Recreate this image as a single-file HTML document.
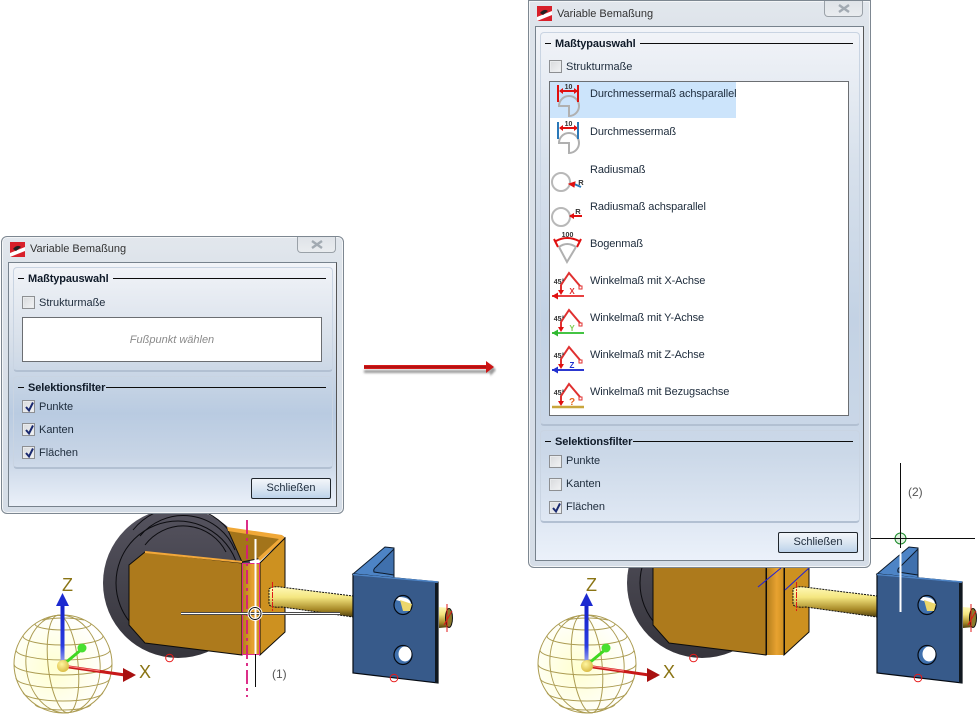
<!DOCTYPE html>
<html lang="de"><head><meta charset="utf-8"><title>Variable Bemaßung</title>
<style>
html,body{margin:0;padding:0;background:#fff;width:977px;height:716px;overflow:hidden}
body{position:relative;font-family:"Liberation Sans",sans-serif;font-size:11px;color:#1c2a3a}
.a{position:absolute}
svg.scene{position:absolute;left:0;top:0}
.dlg{position:absolute;border:1px solid #7d8791;border-radius:6px;background:linear-gradient(#e2e7ed,#dde3ea 30px,#d5dde7);box-sizing:border-box;box-shadow:inset 0 0 0 1px #f3f5f7}
.client{position:absolute;left:6px;top:25px;border:1px solid #77828d;border-right-color:#555;box-sizing:border-box;background:#e8eef7}
.grp{position:absolute;left:4px;border-radius:4px;box-sizing:border-box;border:1px solid #c9d4e2;border-bottom:2px solid #b2c0d2}
.lg{position:absolute;left:19px;font-weight:bold;font-size:11px;color:#0f1a28;line-height:14px;white-space:nowrap;letter-spacing:-.1px}
.ln{position:absolute;height:1px;background:#0c0c0c}
.cb{position:absolute;width:13px;height:13px;box-sizing:border-box;border:1px solid #8d8f92;background:linear-gradient(135deg,#d8dadd,#f2f3f4);box-shadow:inset 0 0 0 1px #e9ebed}
.cb svg{position:absolute;left:1px;top:0}
.t{position:absolute;white-space:nowrap;line-height:14px;font-size:11px;letter-spacing:-.02px;color:#1d2b3b}
.li{letter-spacing:-.1px}
.btn{position:absolute;width:80px;height:21px;box-sizing:border-box;border:1px solid #20262c;border-radius:2px;background:linear-gradient(#f3f6fa,#dbe6f2 50%,#bcd2ea);text-align:center;line-height:19px;font-size:11px;color:#1d2b3b}
.close{position:absolute;width:39px;height:16px;border:1px solid #9aa1a8;border-top:0;border-radius:0 0 4px 4px;background:linear-gradient(#dfe3e8,#e9ecef);box-sizing:border-box;text-align:center}
.close svg{margin-top:3px}
.lst{position:absolute;background:#fff;border:1px solid #6b6e72;box-sizing:border-box}
</style></head><body>

<svg class="scene" width="977" height="716" viewBox="0 0 977 716" font-family="Liberation Sans, sans-serif">
<defs>
<linearGradient id="sh" x1="0" y1="0" x2="0" y2="1"><stop offset="0" stop-color="#fff9b8"/><stop offset=".35" stop-color="#f4e680"/><stop offset=".75" stop-color="#a88a28"/><stop offset="1" stop-color="#4e4010"/></linearGradient>
<radialGradient id="gl" cx=".4" cy=".55" r=".55"><stop offset="0" stop-color="#ffffd0"/><stop offset="1" stop-color="#fff"/></radialGradient>
<radialGradient id="ball" cx=".4" cy=".35" r=".7"><stop offset="0" stop-color="#fff6a0"/><stop offset="1" stop-color="#d8b840"/></radialGradient>
<linearGradient id="wh" x1="0" y1="0" x2="0" y2="1"><stop offset="0" stop-color="#55535f"/><stop offset="1" stop-color="#35343b"/></linearGradient>
<linearGradient id="bend" x1="0" y1="0" x2="1" y2="0"><stop offset="0" stop-color="#b07c1c"/><stop offset=".6" stop-color="#e8a230"/><stop offset="1" stop-color="#cc8f20"/></linearGradient>
<linearGradient id="zax" x1="0" y1="0" x2="0" y2="1"><stop offset="0" stop-color="#1420c8"/><stop offset=".7" stop-color="#2a3ce0"/><stop offset="1" stop-color="#a8b0f0"/></linearGradient>
<filter id="bl" x="-5%" y="-100%" width="110%" height="300%"><feGaussianBlur stdDeviation="1"/></filter>

<g id="model">
 <circle cx="185" cy="575" r="61" fill="#4a4853"/>
 <circle cx="178" cy="583" r="75" fill="url(#wh)"/>
 <path d="M133 530A61 61 0 0 1 232 535M140 536A56 56 0 0 1 235 550M145 545A48 48 0 0 1 226 552" fill="none" stroke="#0c0c10" stroke-width="1"/>
 <circle cx="178" cy="583" r="62" fill="none" stroke="#0c0c10" stroke-width="1"/>
 <path d="M227 528L282 536 285 538 262 558 242 562Z" fill="#a3741a" stroke="#111" stroke-width="1"/>
 <path d="M227 527L282 535 285 538 260 561 258 558 279 539 228 531Z" fill="#f0a838"/>
 <path d="M145 552L242 563 242 655 145 643 129 625 129 565Z" fill="#ad7a1c" stroke="#0c0c0c" stroke-width="1"/>
 <path d="M145 552L242 562" stroke="#f3a83a" stroke-width="2"/>
 <path d="M242 563H260V655H242Z" fill="url(#bend)"/>
 <path d="M260 563L285 538V632L260 655Z" fill="#cd9120" stroke="#0c0c0c" stroke-width="1"/>
 <path d="M269 589Q272 586 280 587L353 596V617L282 607Q270 608 269 604Z" fill="url(#sh)" stroke="#111" stroke-width="1" stroke-dasharray="2 1"/>
 <path d="M272.500 582V611" stroke="#e01818" stroke-dasharray="6 1 2 1" stroke-width="1"/>
 <path d="M385 547L353 574 394 578 394 548Z" fill="#4d84c6" stroke="#0d1a2a" stroke-width="1"/>
 <path d="M394 549V575L374 572Q373 569 376 567Z" fill="#3f70ad" stroke="#0d1a2a" stroke-width="1"/>
 <path d="M353 574L438 582V683L353 673Z" fill="#375a8a" stroke="#050a12" stroke-width="1.200"/>
 <path d="M353 574.500L438 582" stroke="#4d84c6" stroke-width="1.500"/>
 <path d="M435 583H438V683H435Z" fill="#101820"/>
 <ellipse cx="403" cy="605" rx="9" ry="9.500" fill="#3f70ad" stroke="#050a12" stroke-width="1.200"/>
 <path d="M399 597Q410 597 411 604L396 600Z" fill="#fff"/>
 <path d="M400 600L412 604 410 611 403 611Z" fill="#ecd76c"/>
 <ellipse cx="403" cy="655" rx="9" ry="9.500" fill="#3f70ad" stroke="#050a12" stroke-width="1.200"/>
 <ellipse cx="405" cy="654" rx="6.500" ry="7.500" fill="#fff"/>
 <path d="M439 607L450 608V627L439 628Z" fill="url(#sh)"/>
 <ellipse cx="449" cy="618" rx="3.500" ry="9.500" fill="#8b7a2c" stroke="#111" stroke-width="1"/>
 <path d="M447 604V632M444 625L452 611" stroke="#e01818" stroke-width="1"/>
 <circle cx="169.500" cy="658" r="3.800" fill="none" stroke="#e81818"/>
 <circle cx="394" cy="678" r="3.800" fill="none" stroke="#e81818"/>

 <circle cx="63" cy="664" r="49" fill="url(#gl)"/>
 <g fill="none" stroke="#ac9c52" stroke-width="1">
  <circle cx="63" cy="664" r="49"/>
  <ellipse cx="63" cy="664" rx="37" ry="49" transform="rotate(-6 63 664)"/>
  <ellipse cx="63" cy="664" rx="15" ry="49" transform="rotate(-6 63 664)"/>
  <path d="M35 624A28 6 0 0 0 91 624M23 636A40 9 0 0 0 103 636M16 650A47 10 0 0 0 110 650M14 664A49 11 0 0 0 112 664M16 678A47 10 0 0 0 110 678M23 692A40 9 0 0 0 103 692M35 704A28 6 0 0 0 91 704M42 620Q63 616 84 620"/>
 </g>
 <rect x="60.500" y="604" width="4" height="60" fill="url(#zax)"/>
 <path d="M62.500 593L69 606H56Z" fill="#1c2ad0"/>
 <path d="M62 666L132 676" stroke="#c81818" stroke-width="3"/>
 <path d="M66 666L100 671" stroke="#ff8080" stroke-width="1"/>
 <path d="M136 675L123 668V682Z" fill="#a81010"/>
 <path d="M64 664L82 649" stroke="#40d820" stroke-width="3"/>
 <circle cx="82" cy="648" r="4.500" fill="#48e030"/>
 <circle cx="63" cy="666" r="6" fill="url(#ball)"/>
 <text x="62" y="591" font-size="18" fill="#8a7414">Z</text>
 <text x="139" y="678" font-size="18" fill="#8a7414">X</text>
</g>

<g id="ic">
 <path d="M559 106A10 10 0 1 1 569 116V106Z" fill="none" stroke="#b0b0b0" stroke-width="2"/>
 <path d="M560 91H578" stroke="#e01010" stroke-width="2"/>
 <path d="M559 91l4-3v6ZM578 91l-4-3v6Z" fill="#e01010"/>
 <text x="568.500" y="89" font-size="7" font-weight="bold" text-anchor="middle" fill="#333">10</text>
</g>
<g id="ang">
 <path d="M561 293V285L569 273 580 286" fill="none" stroke="#e03030" stroke-width="2"/>
 <path d="M561 295l-3-5h6Z" fill="#e01010"/>
 <rect x="579" y="286" width="3" height="3" fill="#fff" stroke="#e03030"/>
 <text x="559" y="284" font-size="7" font-weight="bold" text-anchor="middle" fill="#333">45°</text>
</g>
</defs>

<use href="#model"/>
<use href="#model" transform="translate(524 0)"/>

<!-- left overlays -->
<path d="M247 520V697" stroke="#d8187c" stroke-width="1.800" stroke-dasharray="14 4 3 4"/>
<rect x="242.500" y="563.500" width="17" height="91" fill="none" stroke="#e0288c" stroke-width="1"/>
<path d="M181 613.500H340" stroke="#0c0c0c" stroke-width="3"/><path d="M181 613.500H340" stroke="#fff" stroke-width="1.400"/>
<path d="M255.500 539V687" stroke="#0c0c0c" stroke-width="1"/><path d="M255.500 539V654" stroke="#fff" stroke-width="2"/>
<circle cx="255" cy="613.500" r="6" fill="none" stroke="#fff" stroke-width="3"/><circle cx="255" cy="613.500" r="6" fill="none" stroke="#111" stroke-width="1"/>
<text x="272" y="678" font-size="12" fill="#555">(1)</text>

<!-- right overlays -->
<path d="M766.500 560V655M784.500 560V655" stroke="#0c0c0c" stroke-width="1"/>
<path d="M758 587L781 568M785 590L809 568" stroke="#2020d8" stroke-width="1"/>
<path d="M871 538.500H975M900.500 463V612" stroke="#0c0c0c" stroke-width="1"/>
<path d="M900.500 548V612" stroke="#fff" stroke-width="2"/>
<circle cx="900.500" cy="538.500" r="5.500" fill="#dff0df" stroke="#1a8a2a" stroke-width="1"/>
<path d="M871 538.500H975M900.500 530V546" stroke="#0c0c0c" stroke-width="1"/>
<text x="908" y="496" font-size="12" fill="#555">(2)</text>

<!-- red arrow -->
<rect x="364" y="370" width="128" height="3" fill="#999" filter="url(#bl)"/>
<path d="M490 364L496 370 490 376Z" fill="#999" filter="url(#bl)"/>
<rect x="364" y="365" width="124" height="4" fill="#d81818"/>
<rect x="364" y="366.500" width="124" height="1" fill="#8e0c0c"/>
<path d="M486 361L494 367 486 373Z" fill="#cc1414"/>
</svg>

<!-- LEFT DIALOG -->
<div class="dlg" style="left:1px;top:236px;width:343px;height:278px">
 <svg class="a" style="left:8px;top:5px" width="15" height="15" viewBox="0 0 15 15"><rect width="15" height="15" fill="#d8202a"/><path d="M0 11L15 5V9L0 15Z" fill="#fff"/><path d="M3 7Q7 2 11 5L6 9Z" fill="#222"/></svg>
 <div class="t" style="left:28px;top:5px;color:#333">Variable Bemaßung</div>
 <div class="close" style="left:295px;top:0"><svg width="12" height="9" viewBox="0 0 12 9"><path d="M1 1L11 8M11 1L1 8" stroke="#a2aab2" stroke-width="2.400"/></svg></div>
 <div class="client" style="left:6px;top:25px;width:329px;height:245px;background:linear-gradient(#f2f4f8 0,#d5dee9 35%,#b9cbe1 62%,#c8d5e6 80%,#eaf0f9 100%)">
  <div class="grp" style="top:4px;width:320px;height:105px"></div>
  <div class="ln" style="left:9px;top:15px;width:6px"></div>
  <div class="lg" style="top:9px">Maßtypauswahl</div>
  <div class="ln" style="left:104px;top:15px;width:213px"></div>
  <div class="cb" style="left:13px;top:33px"></div>
  <div class="t" style="left:30px;top:33px">Strukturmaße</div>
  <div class="lst" style="left:13px;top:54px;width:300px;height:45px"></div>
  <div class="t" style="left:13px;width:300px;top:70px;text-align:center;font-style:italic;color:#8a8a8a;letter-spacing:0">Fußpunkt wählen</div>
  <div class="grp" style="top:113px;width:320px;height:93px"></div>
  <div class="ln" style="left:9px;top:124px;width:6px"></div>
  <div class="lg" style="top:118px">Selektionsfilter</div>
  <div class="ln" style="left:97px;top:124px;width:220px"></div>
  <div class="cb" style="left:13px;top:137px"><svg width="11" height="12" viewBox="0 0 11 12"><path d="M2 6L5 9.500 9 1.500" fill="none" stroke="#1a2a70" stroke-width="2"/></svg></div>
  <div class="t" style="left:30px;top:137px">Punkte</div>
  <div class="cb" style="left:13px;top:160px"><svg width="11" height="12" viewBox="0 0 11 12"><path d="M2 6L5 9.500 9 1.500" fill="none" stroke="#1a2a70" stroke-width="2"/></svg></div>
  <div class="t" style="left:30px;top:160px">Kanten</div>
  <div class="cb" style="left:13px;top:183px"><svg width="11" height="12" viewBox="0 0 11 12"><path d="M2 6L5 9.500 9 1.500" fill="none" stroke="#1a2a70" stroke-width="2"/></svg></div>
  <div class="t" style="left:30px;top:183px">Flächen</div>
  <div class="btn" style="left:242px;top:215px">Schließen</div>
 </div>
</div>

<!-- RIGHT DIALOG -->
<div class="dlg" style="left:528px;top:0;width:343px;height:568px;border-radius:0 0 6px 6px">
 <svg class="a" style="left:8px;top:5px" width="15" height="15" viewBox="0 0 15 15"><rect width="15" height="15" fill="#d8202a"/><path d="M0 11L15 5V9L0 15Z" fill="#fff"/><path d="M3 7Q7 2 11 5L6 9Z" fill="#222"/></svg>
 <div class="t" style="left:28px;top:6px;color:#333">Variable Bemaßung</div>
 <div class="close" style="left:295px;top:0"><svg width="12" height="9" viewBox="0 0 12 9"><path d="M1 1L11 8M11 1L1 8" stroke="#a2aab2" stroke-width="2.400"/></svg></div>
 <div class="client" style="left:6px;top:25px;width:329px;height:535px;background:linear-gradient(#f2f4f8 0,#d8e1ec 25%,#c3d2e4 55%,#cbd8e8 80%,#ebf1fa 100%)">
  <div class="grp" style="top:5px;width:320px;height:394px"></div>
  <div class="ln" style="left:9px;top:16px;width:6px"></div>
  <div class="lg" style="top:10px">Maßtypauswahl</div>
  <div class="ln" style="left:104px;top:16px;width:213px"></div>
  <div class="cb" style="left:13px;top:33px"></div>
  <div class="t" style="left:30px;top:33px">Strukturmaße</div>
  <div class="lst" style="left:13px;top:54px;width:300px;height:335px">
   <div class="a" style="left:0;top:0;width:186px;height:36px;background:#cce4fb"></div>
  </div>
  <div class="t li" style="left:54px;top:60px">Durchmessermaß achsparallel</div>
  <div class="t li" style="left:54px;top:98px">Durchmessermaß</div>
  <div class="t li" style="left:54px;top:136px">Radiusmaß</div>
  <div class="t li" style="left:54px;top:173px">Radiusmaß achsparallel</div>
  <div class="t li" style="left:54px;top:210px">Bogenmaß</div>
  <div class="t li" style="left:54px;top:247px">Winkelmaß mit X-Achse</div>
  <div class="t li" style="left:54px;top:284px">Winkelmaß mit Y-Achse</div>
  <div class="t li" style="left:54px;top:321px">Winkelmaß mit Z-Achse</div>
  <div class="t li" style="left:54px;top:358px">Winkelmaß mit Bezugsachse</div>
  <div class="grp" style="top:403px;width:320px;height:93px"></div>
  <div class="ln" style="left:9px;top:414px;width:6px"></div>
  <div class="lg" style="top:408px">Selektionsfilter</div>
  <div class="ln" style="left:97px;top:414px;width:220px"></div>
  <div class="cb" style="left:13px;top:428px"></div>
  <div class="t" style="left:30px;top:427px">Punkte</div>
  <div class="cb" style="left:13px;top:451px"></div>
  <div class="t" style="left:30px;top:450px">Kanten</div>
  <div class="cb" style="left:13px;top:474px"><svg width="11" height="12" viewBox="0 0 11 12"><path d="M2 6L5 9.500 9 1.500" fill="none" stroke="#1a2a70" stroke-width="2"/></svg></div>
  <div class="t" style="left:30px;top:473px">Flächen</div>
  <div class="btn" style="left:242px;top:505px">Schließen</div>
 </div>
</div>

<!-- list icons -->
<svg class="scene" width="977" height="716" viewBox="0 0 977 716" font-family="Liberation Sans, sans-serif" style="pointer-events:none">
 <use href="#ic"/>
 <path d="M558 85V102M578 85V102" stroke="#e01010" stroke-width="2"/>
 <use href="#ic" transform="translate(0 37)"/>
 <path d="M558 122V139M578 122V139" stroke="#2a78b8" stroke-width="2"/>

 <circle cx="561" cy="182" r="9" fill="none" stroke="#b8b8b8" stroke-width="2"/>
 <path d="M581 187L573 183.500" stroke="#2a78b8" stroke-width="2"/><path d="M569 184L575 182 574 187Z" fill="#e01010" stroke="#e01010"/>
 <text x="581" y="185" font-size="7.500" font-weight="bold" text-anchor="middle" fill="#333">R</text>

 <circle cx="561" cy="217" r="9" fill="none" stroke="#b8b8b8" stroke-width="2"/>
 <path d="M570 216H582" stroke="#e01010" stroke-width="2"/><path d="M569 216l5-3v6Z" fill="#e01010"/>
 <text x="578" y="214" font-size="7.500" font-weight="bold" text-anchor="middle" fill="#333">R</text>

 <text x="567.500" y="237" font-size="7" font-weight="bold" text-anchor="middle" fill="#333">100</text>
 <path d="M559 247L567 262 576 247M559 247Q567 241 576 247" fill="none" stroke="#b0b0b0" stroke-width="2"/>
 <path d="M554 239L558 247M581 239L577 247M556 241Q567 235 579 241" fill="none" stroke="#e01010" stroke-width="2"/>

 <use href="#ang"/>
 <use href="#ang" transform="translate(0 37)"/>
 <use href="#ang" transform="translate(0 74)"/>
 <use href="#ang" transform="translate(0 111)"/>
 <path d="M552 296H584" stroke="#e84040" stroke-width="2"/><path d="M552 296l6-3.500v7Z" fill="#e01010"/>
 <text x="572" y="294" font-size="8" font-weight="bold" text-anchor="middle" fill="#e03030">X</text>
 <path d="M552 333H584" stroke="#44c444" stroke-width="2"/><path d="M552 333l6-3.500v7Z" fill="#30b830"/>
 <text x="572" y="331" font-size="8" font-weight="bold" text-anchor="middle" fill="#7ccc50">Y</text>
 <path d="M552 370H584" stroke="#2c38d0" stroke-width="2"/><path d="M552 370l6-3.500v7Z" fill="#2030d0"/>
 <text x="572" y="368" font-size="8" font-weight="bold" text-anchor="middle" fill="#2030d0">Z</text>
 <path d="M552 407H584" stroke="#c8a63c" stroke-width="2.400"/>
 <text x="572" y="405" font-size="10" font-weight="bold" text-anchor="middle" fill="#e8641c">?</text>
</svg>

</body></html>
